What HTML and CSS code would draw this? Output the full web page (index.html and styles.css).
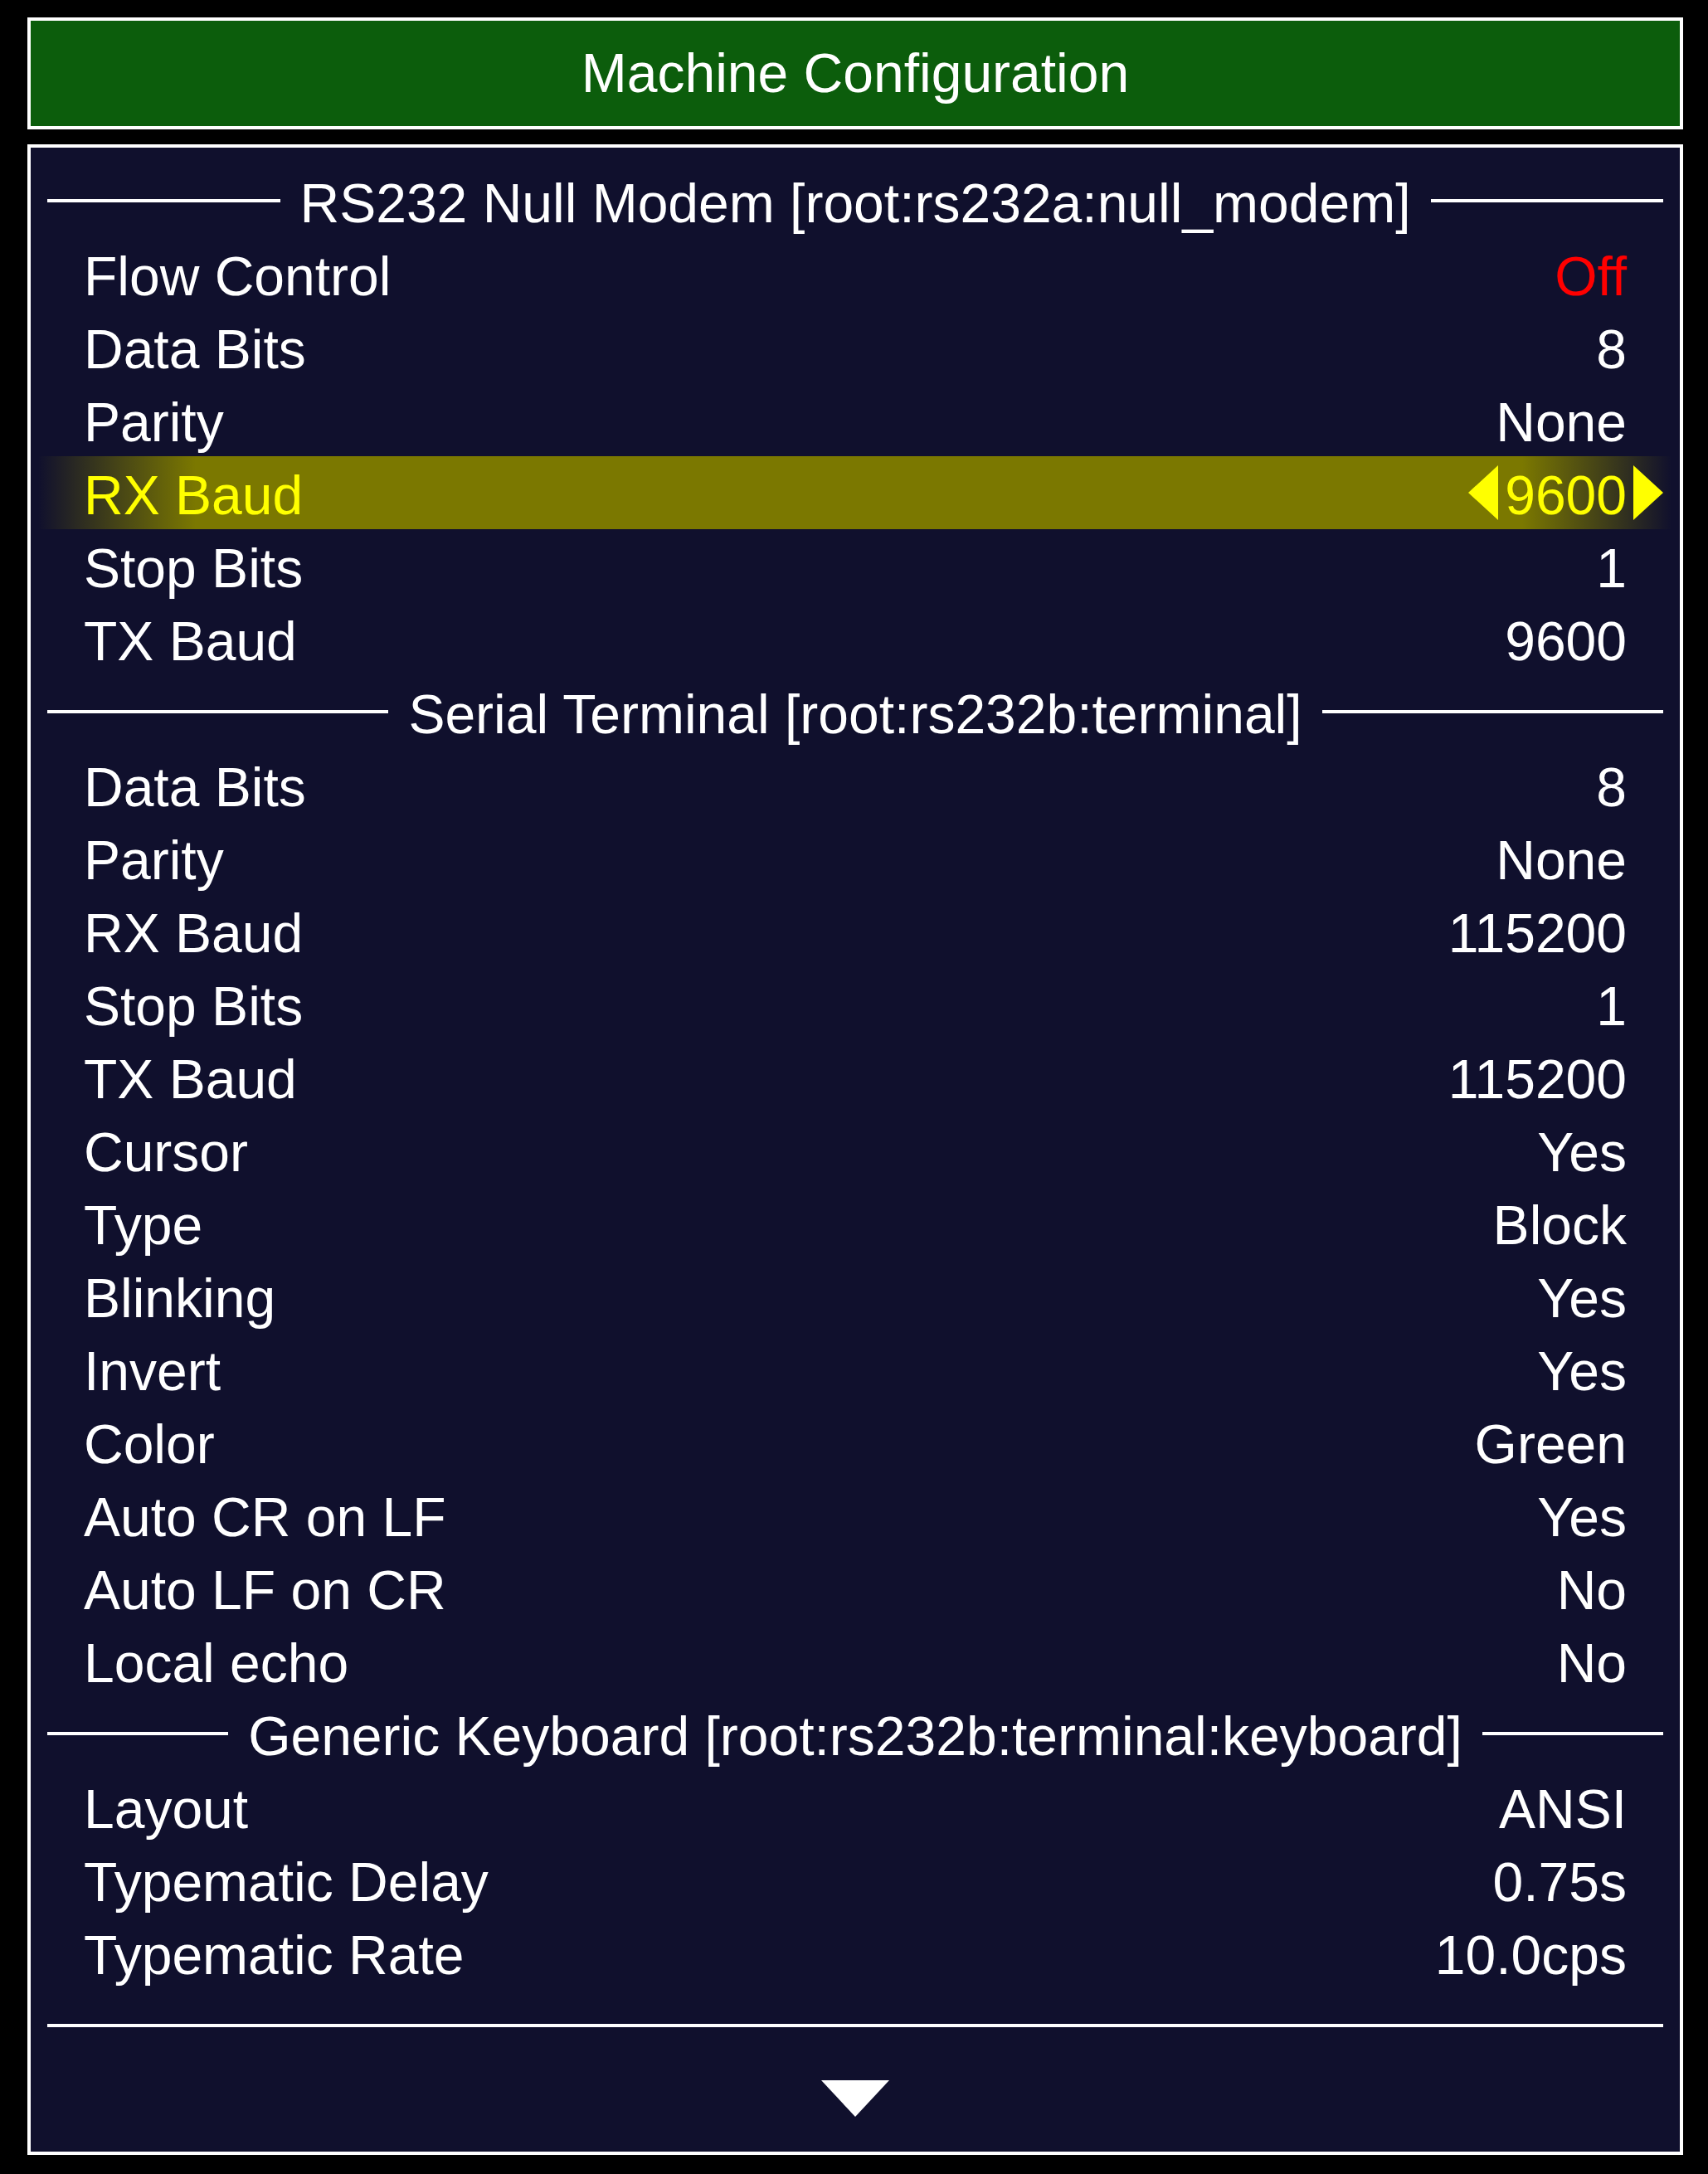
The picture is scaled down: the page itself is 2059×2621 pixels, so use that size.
FILE: index.html
```html
<!DOCTYPE html>
<html lang="en">
<head>
<meta charset="utf-8">
<title>Machine Configuration</title>
<link rel="stylesheet" href="styles.css">
</head>
<body>
<div class="screen">
  <header class="title">Machine Configuration</header>
  <main class="menu">
    <div class="section"><span class="rule"></span><span class="section-text">RS232 Null Modem [root:rs232a:null_modem]</span><span class="rule"></span></div>
    <div class="row"><span class="label">Flow Control</span><span class="value off">Off</span></div>
    <div class="row"><span class="label">Data Bits</span><span class="value">8</span></div>
    <div class="row"><span class="label">Parity</span><span class="value">None</span></div>
    <div class="row selected">
      <span class="label">RX Baud</span>
      <span class="value-group">
        <svg class="arrow" viewBox="0 0 36 66" width="36" height="66"><polygon points="36,0 36,66 0,33"/></svg>
        <span class="value">9600</span>
        <svg class="arrow" viewBox="0 0 36 66" width="36" height="66"><polygon points="0,0 0,66 36,33"/></svg>
      </span>
    </div>
    <div class="row"><span class="label">Stop Bits</span><span class="value">1</span></div>
    <div class="row"><span class="label">TX Baud</span><span class="value">9600</span></div>
    <div class="section"><span class="rule"></span><span class="section-text">Serial Terminal [root:rs232b:terminal]</span><span class="rule"></span></div>
    <div class="row"><span class="label">Data Bits</span><span class="value">8</span></div>
    <div class="row"><span class="label">Parity</span><span class="value">None</span></div>
    <div class="row"><span class="label">RX Baud</span><span class="value">115200</span></div>
    <div class="row"><span class="label">Stop Bits</span><span class="value">1</span></div>
    <div class="row"><span class="label">TX Baud</span><span class="value">115200</span></div>
    <div class="row"><span class="label">Cursor</span><span class="value">Yes</span></div>
    <div class="row"><span class="label">Type</span><span class="value">Block</span></div>
    <div class="row"><span class="label">Blinking</span><span class="value">Yes</span></div>
    <div class="row"><span class="label">Invert</span><span class="value">Yes</span></div>
    <div class="row"><span class="label">Color</span><span class="value">Green</span></div>
    <div class="row"><span class="label">Auto CR on LF</span><span class="value">Yes</span></div>
    <div class="row"><span class="label">Auto LF on CR</span><span class="value">No</span></div>
    <div class="row"><span class="label">Local echo</span><span class="value">No</span></div>
    <div class="section"><span class="rule"></span><span class="section-text">Generic Keyboard [root:rs232b:terminal:keyboard]</span><span class="rule"></span></div>
    <div class="row"><span class="label">Layout</span><span class="value">ANSI</span></div>
    <div class="row"><span class="label">Typematic Delay</span><span class="value">0.75s</span></div>
    <div class="row"><span class="label">Typematic Rate</span><span class="value">10.0cps</span></div>
    <div class="divider"><span class="rule"></span></div>
    <div class="more"><svg class="down" viewBox="0 0 82 44" width="82" height="44"><polygon points="0,0 82,0 41,44"/></svg></div>
  </main>
</div>
</body>
</html>
```
FILE: styles.css
```css
* {
  box-sizing: border-box;
}

html,
body {
  margin: 0;
  background: #000;
}

body {
  width: 2059px;
  height: 2621px;
  font-family: "Liberation Sans", Arial, sans-serif;
  font-size: 66px;
  color: #fff;
}

.screen {
  display: flex;
  flex-direction: column;
  gap: 18px;
  padding: 21px 30px 0 33px;
}

.title {
  height: 135px;
  border: 4px solid #fff;
  background: #0c5d0c;
  line-height: 127px;
  text-align: center;
  white-space: nowrap;
}

.menu {
  height: 2424px;
  border: 4px solid #fff;
  background: #10102d;
  padding: 20px 10px 20px 9px;
  display: flex;
  flex-direction: column;
}

.row,
.section,
.divider,
.more {
  flex: 0 0 88px;
  height: 88px;
  display: flex;
  align-items: center;
  padding: 0 10px 0 11px;
}

.label,
.value,
.section-text {
  display: block;
  height: 88px;
  line-height: 78px;
  padding-top: 8px;
  padding-bottom: 2px;
  white-space: nowrap;
}

.label {
  margin-left: 44px;
  flex: 1;
}

.row > .value {
  margin-right: 44px;
}

.off {
  color: #ff0000;
}

.selected {
  background: linear-gradient(to right,
    rgba(123, 120, 0, 0) 0,
    #7b7800 190px,
    #7b7800 calc(100% - 180px),
    rgba(123, 120, 0, 0) 100%);
  color: #ffff00;
}

.value-group {
  display: flex;
  align-items: center;
  gap: 8px;
}

.arrow {
  display: block;
  fill: #ffff00;
}

.rule {
  flex: 1;
  height: 4px;
  background: #fff;
}

.section {
  gap: 24px;
}

.more {
  justify-content: center;
}

.down {
  display: block;
  fill: #fff;
}
```
